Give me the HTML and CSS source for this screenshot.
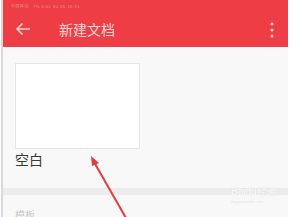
FILE: index.html
```html
<!DOCTYPE html>
<html>
<head>
<meta charset="utf-8">
<link rel="stylesheet" href="styles.css">
</head>
<body>
<div class="page">
  <div class="app">
    <header class="topbar">
      <div class="status">中国移动 &nbsp; 7% 8:42 4G 4G 18:03</div>
      <div class="bar">
        <svg class="back" width="16" height="14" viewBox="0 0 16 14"><path d="M15 7H2M7.5 1.5L2 7l5.5 5.5" fill="none" stroke="#f6cfd0" stroke-width="1.6"/></svg>
        <span class="title">新建文档</span>
        <span class="spacer"></span>
        <svg class="more" width="4" height="16" viewBox="0 0 4 16"><circle cx="2" cy="2" r="1.5" fill="#f6cfd0"/><circle cx="2" cy="8" r="1.5" fill="#f6cfd0"/><circle cx="2" cy="14" r="1.5" fill="#f6cfd0"/></svg>
      </div>
    </header>
    <main class="content">
      <section class="blank">
        <div class="card"></div>
        <div class="label">空白</div>
      </section>
      <div class="divider"></div>
      <div class="section-title">模板</div>
    </main>
  </div>
  <div class="watermark">Bai<span class="paw">du</span>经验<div class="sub">jingyan.baidu.com</div></div>
  <svg class="arrow" width="301" height="217" viewBox="0 0 301 217"><line x1="126" y1="218" x2="94" y2="162" stroke="#e23b3b" stroke-width="2"/><path d="M91 156 L99 163 L92 166 Z" fill="#e23b3b"/></svg>
</div>
</body>
</html>
```
FILE: styles.css
```css
html, body {
  margin: 0;
  padding: 0;
  background: #ffffff;
}
body {
  width: 301px;
  height: 217px;
  overflow: hidden;
  font-family: "Noto Sans CJK SC", "Noto Sans", sans-serif;
}
.page {
  position: relative;
  width: 301px;
  height: 217px;
  display: flex;
}
.app {
  margin-left: 1px;
  width: 285px;
  height: 217px;
  border-left: 2px solid #d8d8d8;
  background: #f8f8f8;
  display: flex;
  flex-direction: column;
  overflow: hidden;
}
.topbar {
  flex-shrink: 0;
  background: #ee3d44;
  height: 47px;
  display: flex;
  flex-direction: column;
}
.status {
  height: 12px;
  font-size: 4px;
  line-height: 12px;
  color: #f38a8d;
  padding-left: 8px;
  letter-spacing: 0.5px;
}
.bar {
  flex: 1;
  display: flex;
  align-items: center;
  padding: 0 14px 2px 12px;
}
.back {
  display: block;
}
.title {
  margin-left: 28px;
  font-size: 14px;
  color: #f7d6d7;
}
.spacer { flex: 1; }
.more { display: block; margin-top: 2px; }
.content {
  flex: 1;
  min-height: 0;
  display: flex;
  flex-direction: column;
}
.blank {
  flex-shrink: 0;
  padding: 16px 0 0 12px;
  height: 125px;
  box-sizing: border-box;
}
.card {
  width: 123px;
  height: 84px;
  background: #ffffff;
  border: 1px solid #e6e6e6;
}
.label {
  margin-top: 1px;
  font-size: 14px;
  line-height: 18px;
  color: #3a3a3a;
}
.divider {
  flex-shrink: 0;
  margin-top: 16px;
  height: 7px;
  background: #ececec;
}
.section-title {
  flex-shrink: 0;
  margin-top: 12px;
  padding-left: 12px;
  font-size: 10px;
  color: #c8c8c8;
}
.watermark {
  position: absolute;
  left: 231px;
  top: 185px;
  font-family: "Liberation Sans", sans-serif;
  font-size: 10px;
  color: #ffffff;
  text-shadow: 0 0 1px #cfcfcf;
  opacity: 0.9;
}
.watermark .sub {
  font-size: 4px;
  color: #e6e6e6;
  text-shadow: none;
}
.arrow {
  position: absolute;
  left: 0;
  top: 0;
  pointer-events: none;
}
```
